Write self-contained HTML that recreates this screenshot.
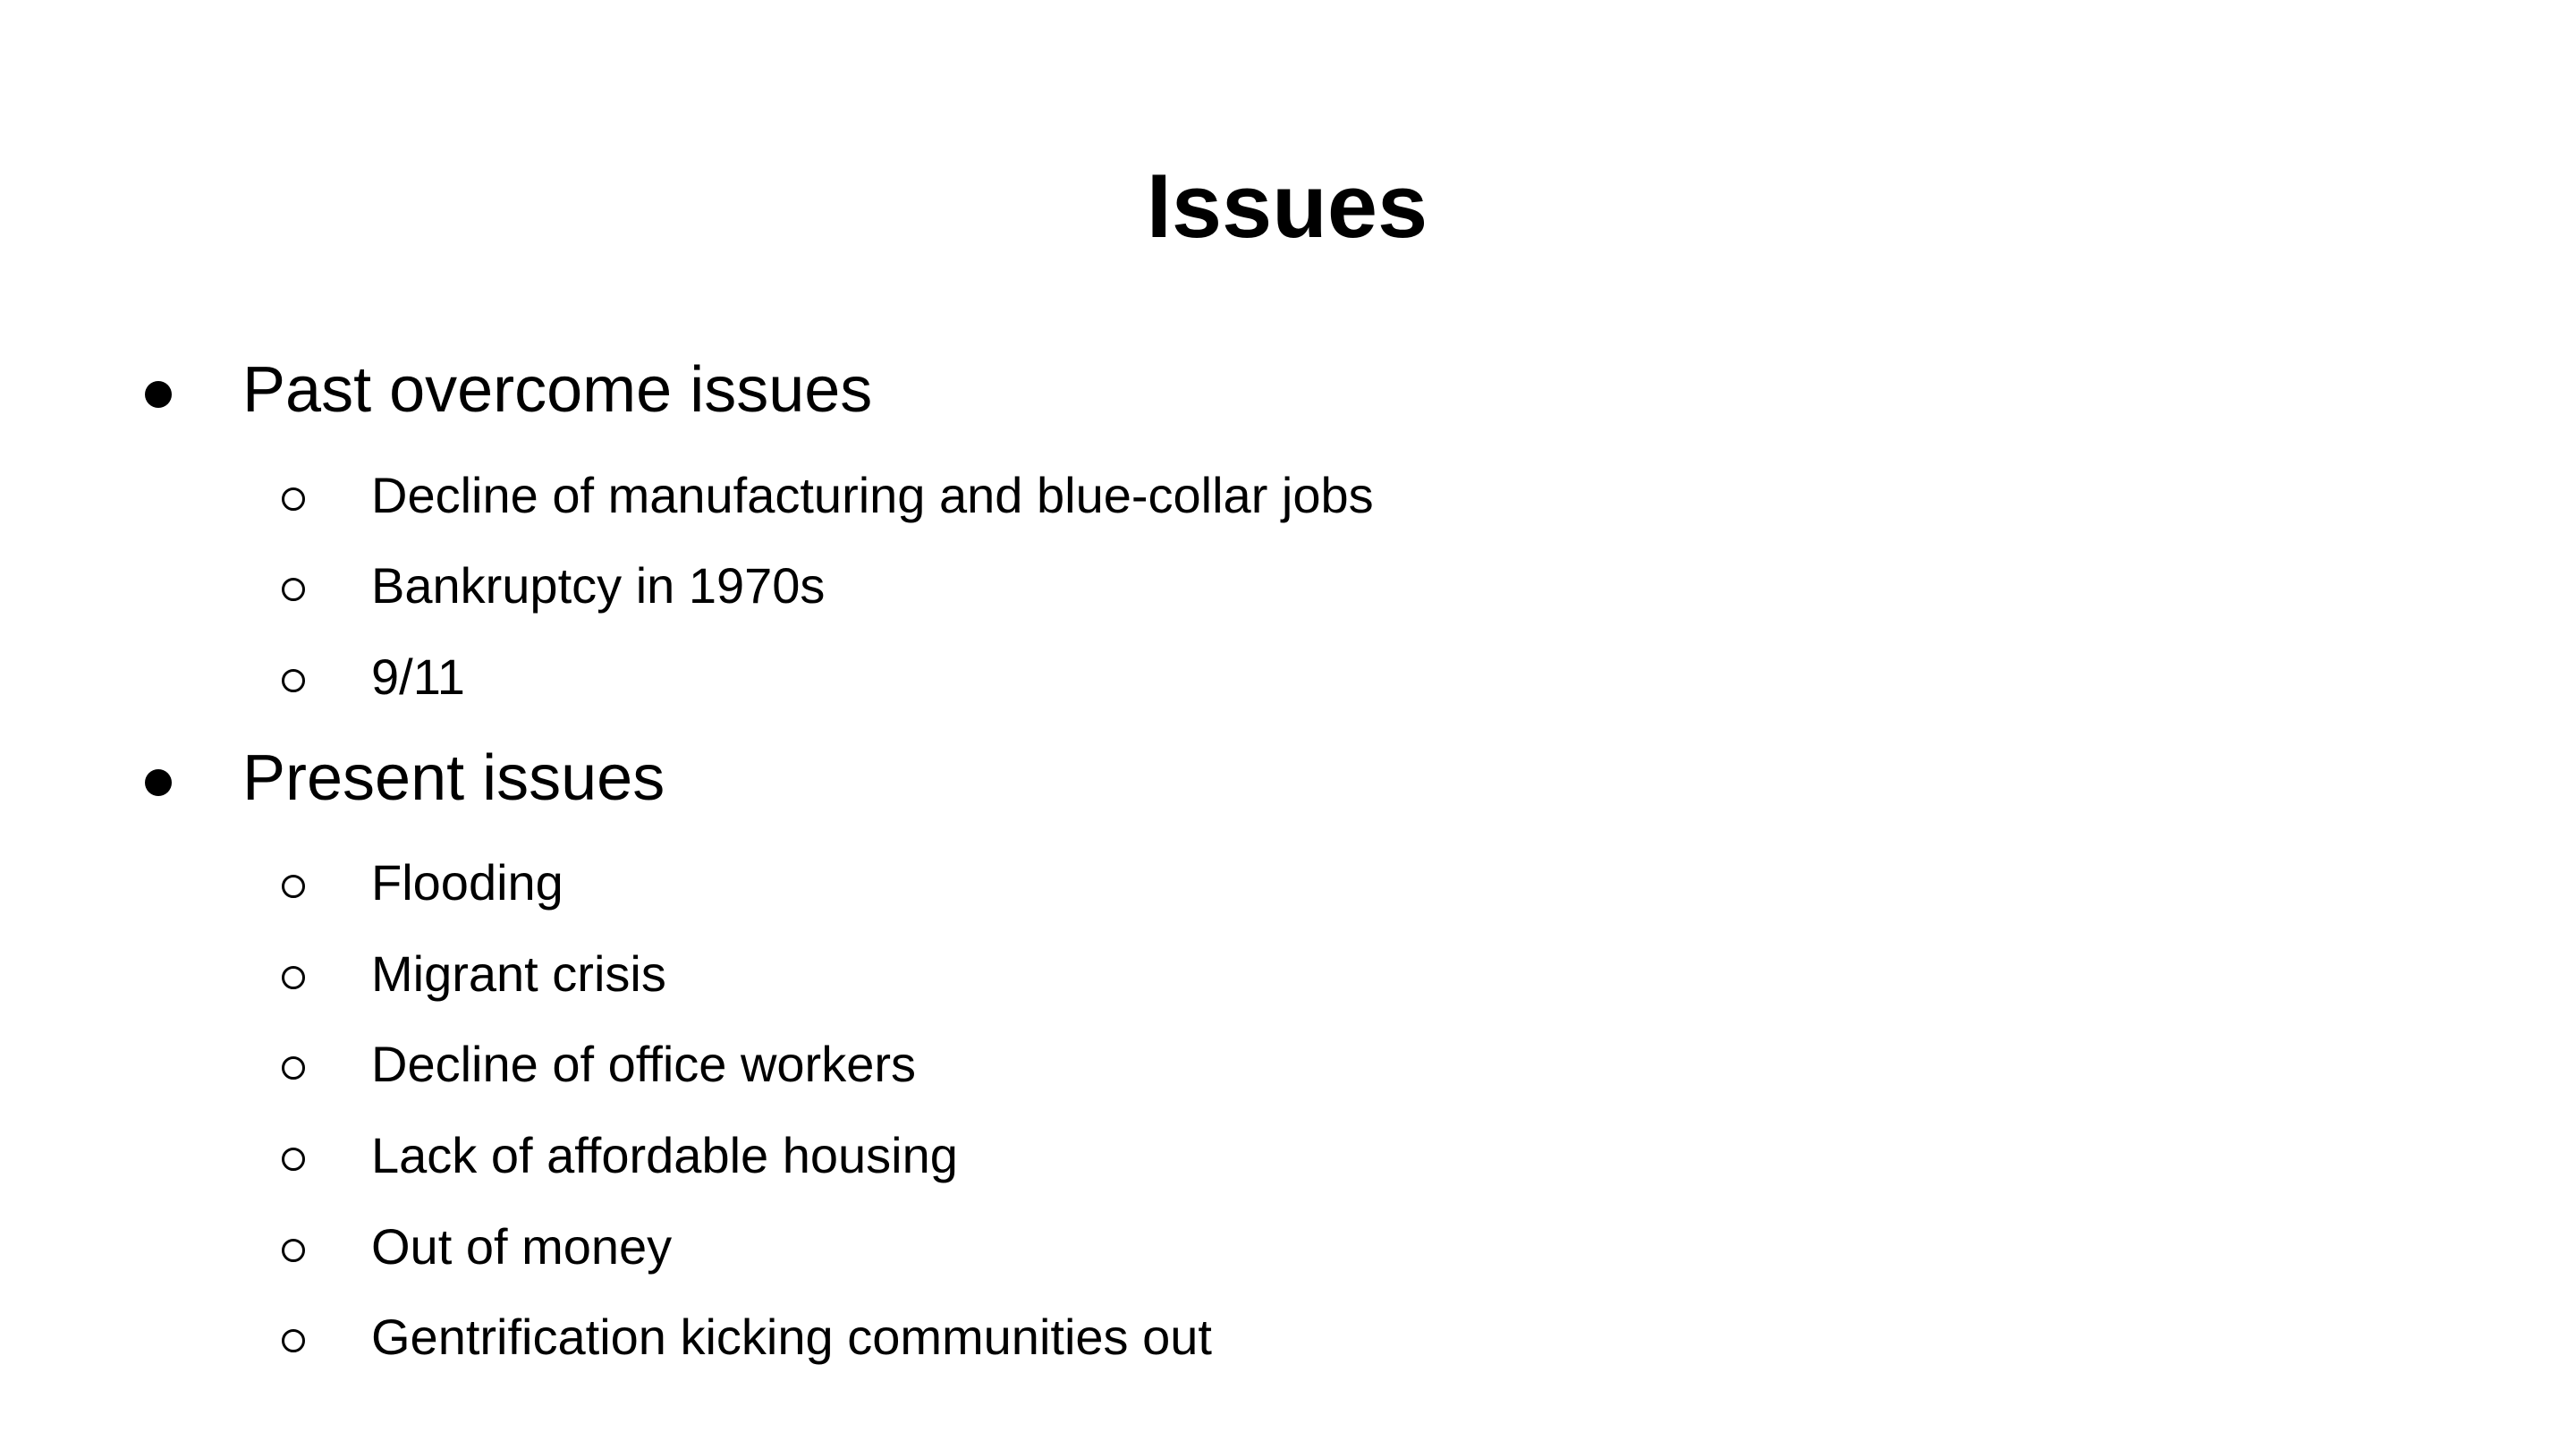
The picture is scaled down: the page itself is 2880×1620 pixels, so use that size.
<!DOCTYPE html>
<html><head><meta charset="utf-8"><style>
html,body{margin:0;padding:0;background:#fff;}
body{width:2880px;height:1620px;position:relative;overflow:hidden;font-family:"Liberation Sans",Arial,sans-serif;color:#000;}
.t{position:absolute;line-height:1;white-space:nowrap;}
.title{font-size:101px;font-weight:bold;left:0;width:2878px;text-align:center;top:181px;}
.m{font-size:72px;left:271px;}
.s{font-size:56px;left:415px;}
.dot{position:absolute;width:30px;height:30px;border-radius:50%;background:#000;left:162px;}
.circ{position:absolute;width:20px;height:20px;border-radius:50%;border:3px solid #000;left:315px;}
</style></head><body>
<div class="t title">Issues</div>
<div class="dot" style="top:426px"></div>
<div class="t m" style="top:400px">Past overcome issues</div>
<div class="circ" style="top:545px"></div><div class="t s" style="top:526px">Decline of manufacturing and blue-collar jobs</div>
<div class="circ" style="top:646px"></div><div class="t s" style="top:627px">Bankruptcy in 1970s</div>
<div class="circ" style="top:748px"></div><div class="t s" style="top:729px">9/11</div>
<div class="dot" style="top:860px"></div>
<div class="t m" style="top:834px">Present issues</div>
<div class="circ" style="top:978px"></div><div class="t s" style="top:959px">Flooding</div>
<div class="circ" style="top:1080px"></div><div class="t s" style="top:1061px">Migrant crisis</div>
<div class="circ" style="top:1181px"></div><div class="t s" style="top:1162px">Decline of office workers</div>
<div class="circ" style="top:1283px"></div><div class="t s" style="top:1264px">Lack of affordable housing</div>
<div class="circ" style="top:1385px"></div><div class="t s" style="top:1366px">Out of money</div>
<div class="circ" style="top:1486px"></div><div class="t s" style="top:1467px">Gentrification kicking communities out</div>
</body></html>
